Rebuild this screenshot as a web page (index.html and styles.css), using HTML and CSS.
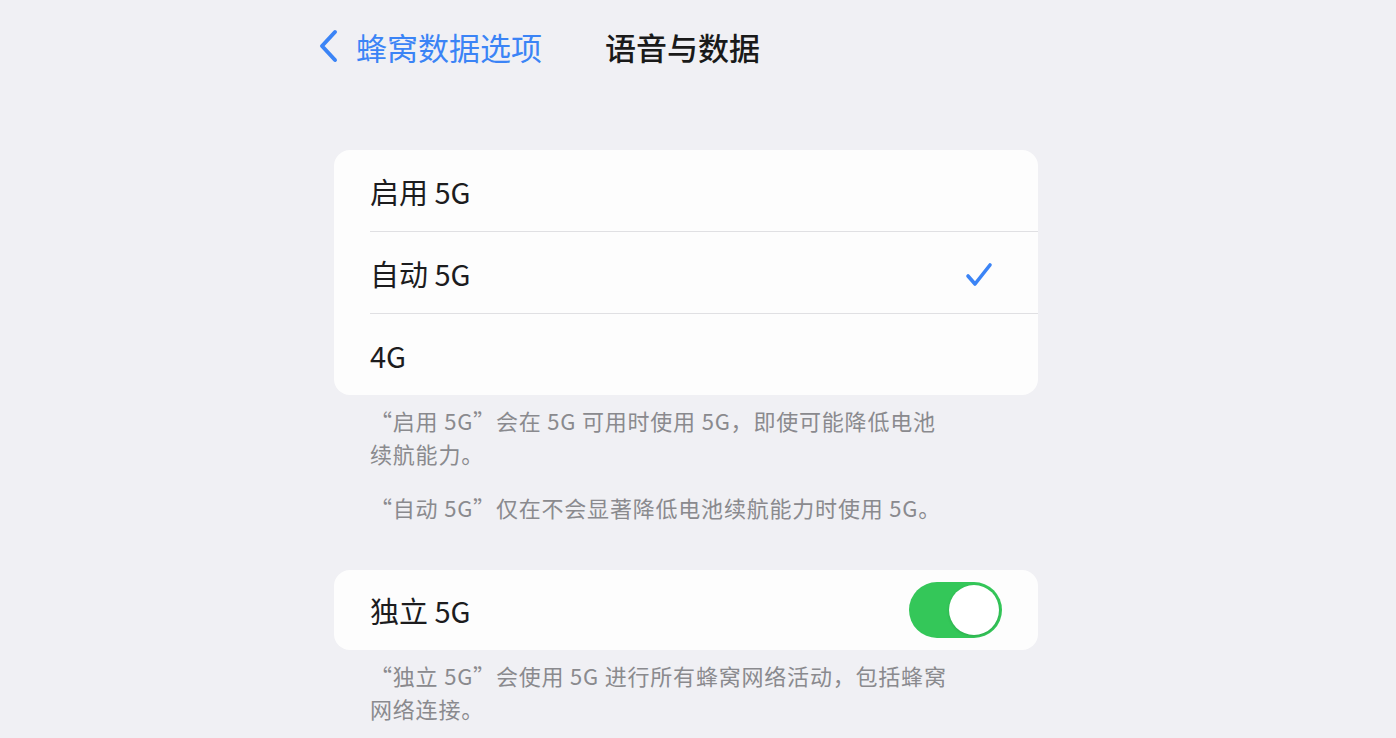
FILE: index.html
```html
<!DOCTYPE html>
<html lang="zh-CN">
<head>
    <meta charset="UTF-8">
    <meta name="viewport" content="width=device-width, initial-scale=1.0">
    <title>语音与数据</title>
    <link rel="stylesheet" href="styles.css">
</head>
<body>
    <div class="nav">
        <a class="back" href="#">
            <svg class="chevron" width="22" height="34" viewBox="0 0 22 34">
                <path d="M17 3 L4 17 L17 31" fill="none" stroke="#3b84f6" stroke-width="4" stroke-linecap="round" stroke-linejoin="round"/>
            </svg>
            <span>蜂窝数据选项</span>
        </a>
        <h1 class="title">语音与数据</h1>
    </div>

    <div class="page">
        <div class="card">
            <div class="row">
                <div class="row-inner"><span class="label">启用 5G</span></div>
            </div>
            <div class="row">
                <div class="row-inner">
                    <span class="label">自动 5G</span>
                    <svg class="check" width="30" height="28" viewBox="0 0 30 28">
                        <path d="M4 15 L11 23 L26 4" fill="none" stroke="#3b84f6" stroke-width="3.6" stroke-linecap="round" stroke-linejoin="round"/>
                    </svg>
                </div>
            </div>
            <div class="row">
                <div class="row-inner"><span class="label">4G</span></div>
            </div>
        </div>

        <div class="footnote">
            <p>“启用 5G”会在 5G 可用时使用 5G，即使可能降低电池续航能力。</p>
            <p>“自动 5G”仅在不会显著降低电池续航能力时使用 5G。</p>
        </div>

        <div class="card card-gap">
            <div class="row">
                <div class="row-inner toggle-row">
                    <span class="label">独立 5G</span>
                    <div class="switch on"><div class="knob"></div></div>
                </div>
            </div>
        </div>

        <div class="footnote">
            <p>“独立 5G”会使用 5G 进行所有蜂窝网络活动，包括蜂窝网络连接。</p>
        </div>
    </div>
</body>
</html>
```

FILE: styles.css
```css
body {
    margin: 0;
    background-color: #f0f0f4;
    font-family: "Noto Sans CJK SC", "Noto Sans", sans-serif;
    color: #1c1c1e;
}

/* top navigation bar */
.nav {
    display: flex;
    align-items: center;
    height: 92px;
    padding-left: 318px;
}
.back {
    display: flex;
    align-items: center;
    text-decoration: none;
    color: #3b84f6;
    font-size: 31px;
}
.chevron {
    margin-right: 16px;
}
.title {
    margin: 0 0 0 63px;
    font-size: 31px;
    font-weight: 500;
    color: #1a1a1a;
}

.page {
    width: 704px;
    margin-left: 334px;
    padding-top: 58px;
}

/* grouped list */
.card {
    background: #fdfdfd;
    border-radius: 16px;
    overflow: hidden;
}
.card-gap {
    margin-top: 46px;
}
.row {
    padding-left: 36px;
}
.row + .row .row-inner {
    border-top: 1px solid #e0e0e3;
}
.row-inner {
    display: flex;
    align-items: center;
    justify-content: space-between;
    height: 81px;
    padding-right: 44px;
}
.label {
    font-size: 29px;
    color: #1c1c1e;
}
.check {
    margin-top: 4px;
}

/* switch */
.toggle-row {
    height: 80px;
    padding-right: 36px;
}
.switch {
    width: 93px;
    height: 56px;
    border-radius: 28px;
    background: #34c759;
    display: flex;
    align-items: center;
    justify-content: flex-end;
    padding: 0 3px;
    box-sizing: border-box;
}
.knob {
    width: 50px;
    height: 50px;
    border-radius: 50%;
    background: #ffffff;
    box-shadow: 0 1px 3px rgba(0,0,0,0.15);
}

/* explanatory text under groups */
.footnote {
    width: 588px;
    padding: 9px 0 0 36px;
    font-size: 22px;
    line-height: 33px;
    letter-spacing: 0.8px;
    color: #8a8a8e;
}
.footnote p {
    margin: 0;
}
.footnote p + p {
    margin-top: 21px;
}
```
